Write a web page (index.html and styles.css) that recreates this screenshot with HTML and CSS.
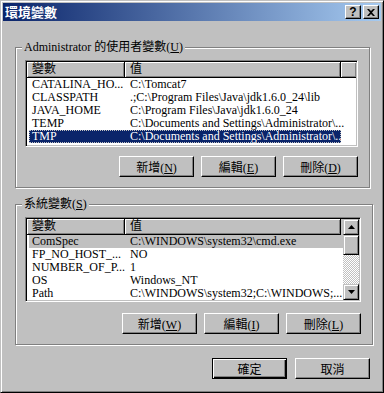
FILE: index.html
```html
<!DOCTYPE html>
<html lang="zh-Hant">
<head>
  <meta charset="UTF-8" />
  <meta name="viewport" content="width=device-width,initial-scale=1.0"/>
  <title>環境變數</title>
  <link rel="stylesheet" href="styles.css">
</head>
<body>
  <div class="window">
    <div class="titlebar">
      <span class="title">環境變數</span>
      <div class="caption-btns">
        <span class="cbtn help">?</span>
        <span class="cbtn">
          <svg width="8" height="7" viewBox="0 0 8 7"><path d="M0 0h2l2 2 2-2h2L5 3.5 8 7H6L4 5 2 7H0l3-3.5z" fill="#000"/></svg>
        </span>
      </div>
    </div>

    <div class="body">
      <fieldset class="group">
        <legend>Administrator 的使用者變數(<u>U</u>)</legend>
        <div class="list">
          <div class="list-main">
            <div class="list-head">
              <span class="hcell col-name">變數</span>
              <span class="hcell col-value">值</span>
              <span class="hcell col-rest"></span>
            </div>
            <div class="list-rows tall">
              <div class="row"><span class="col-name">CATALINA_HO...</span><span class="col-value">C:\Tomcat7</span></div>
              <div class="row"><span class="col-name">CLASSPATH</span><span class="col-value">.;C:\Program Files\Java\jdk1.6.0_24\lib</span></div>
              <div class="row"><span class="col-name">JAVA_HOME</span><span class="col-value">C:\Program Files\Java\jdk1.6.0_24</span></div>
              <div class="row"><span class="col-name">TEMP</span><span class="col-value">C:\Documents and Settings\Administrator\...</span></div>
              <div class="row selected"><span class="col-name">TMP</span><span class="col-value">C:\Documents and Settings\Administrator\...</span></div>
            </div>
          </div>
        </div>
        <div class="btn-row">
          <button class="btn">新增(<u>N</u>)</button>
          <button class="btn">編輯(<u>E</u>)</button>
          <button class="btn">刪除(<u>D</u>)</button>
        </div>
      </fieldset>

      <fieldset class="group second">
        <legend>系統變數(<u>S</u>)</legend>
        <div class="list">
          <div class="list-main">
            <div class="list-head">
              <span class="hcell col-name">變數</span>
              <span class="hcell col-value">值</span>
            </div>
            <div class="list-rows">
              <div class="row inactive"><span class="col-name">ComSpec</span><span class="col-value">C:\WINDOWS\system32\cmd.exe</span></div>
              <div class="row"><span class="col-name">FP_NO_HOST_...</span><span class="col-value">NO</span></div>
              <div class="row"><span class="col-name">NUMBER_OF_P...</span><span class="col-value">1</span></div>
              <div class="row"><span class="col-name">OS</span><span class="col-value">Windows_NT</span></div>
              <div class="row"><span class="col-name">Path</span><span class="col-value">C:\WINDOWS\system32;C:\WINDOWS;...</span></div>
              <div class="row"><span class="col-name">PATHEXT</span><span class="col-value">.COM;.EXE;.BAT;.CMD;.VBS;.VBE;...</span></div>
            </div>
          </div>
          <div class="scrollbar">
            <span class="sbtn">
              <svg width="7" height="4" viewBox="0 0 7 4"><path d="M3.5 0L7 4H0z" fill="#000"/></svg>
            </span>
            <span class="thumb"></span>
            <span class="track"></span>
            <span class="sbtn">
              <svg width="7" height="4" viewBox="0 0 7 4"><path d="M0 0h7L3.5 4z" fill="#000"/></svg>
            </span>
          </div>
        </div>
        <div class="btn-row">
          <button class="btn">新增(<u>W</u>)</button>
          <button class="btn">編輯(<u>I</u>)</button>
          <button class="btn">刪除(<u>L</u>)</button>
        </div>
      </fieldset>

      <div class="dialog-btns">
        <button class="btn default">確定</button>
        <button class="btn">取消</button>
      </div>
    </div>
  </div>
</body>
</html>
```

FILE: styles.css
```css
body {
  margin: 0;
  font-family: "Liberation Serif", "Noto Sans CJK TC", serif;
  font-size: 12px;
  color: #000;
  background: #c0c0c0;
}
.window {
  width: 384px;
  height: 393px;
  box-sizing: border-box;
  background: #c0c0c0;
  border: 1px solid;
  border-color: #c0c0c0 #000 #000 #c0c0c0;
  box-shadow: inset 1px 1px #fff, inset -1px -1px #808080;
  padding: 2px;
}
.titlebar {
  height: 18px;
  display: flex;
  align-items: center;
  justify-content: space-between;
  background: linear-gradient(to right, #0a246a, #a6caf0);
  padding: 0 2px 0 2px;
}
.title {
  color: #fff;
  font-family: "Noto Sans CJK TC", sans-serif;
  font-weight: bold;
  font-size: 13px;
  line-height: 18px;
}
.caption-btns {
  display: flex;
  gap: 2px;
}
.cbtn {
  width: 16px;
  height: 14px;
  box-sizing: border-box;
  display: flex;
  align-items: center;
  justify-content: center;
  background: #c0c0c0;
  border: 1px solid;
  border-color: #fff #000 #000 #fff;
  box-shadow: inset -1px -1px #808080;
}
.cbtn.help {
  font-family: "Liberation Sans", sans-serif;
  font-weight: bold;
  font-size: 12px;
  line-height: 12px;
}
.body {
  padding: 0 11px 0 12px;
}
.group {
  margin: 19px 0 0 0;
  padding: 6px 11px 10px 9px;
  border: 1px solid #808080;
  box-shadow: inset 1px 1px #fff, 1px 1px #fff;
}
.group.second {
  margin-top: 9px;
}
.group legend {
  margin-left: -3px;
  padding: 0 2px;
  background: #c0c0c0;
  line-height: 14px;
}
.list {
  display: flex;
  background: #fff;
  border: 1px solid;
  border-color: #808080 #fff #fff #808080;
  box-shadow: inset 1px 1px #000, inset -1px -1px #c0c0c0;
  padding: 1px;
}
.list-main {
  flex: 1;
  min-width: 0;
}
.list-head {
  display: flex;
  height: 16px;
  background: #c0c0c0;
}
.hcell {
  box-sizing: border-box;
  height: 16px;
  line-height: 15px;
  padding-left: 5px;
  box-shadow: inset 1px 1px #fff, inset -1px -1px #808080;
  border-right: 1px solid #000;
  border-bottom: 1px solid #000;
}
.hcell.col-rest {
  flex: 1;
  border-right: 0;
}
.col-name {
  width: 98px;
  flex: none;
}
.col-value {
  width: 216px;
  flex: none;
}
.list-rows {
  height: 65px;
  overflow: hidden;
}
.list-rows.tall {
  height: 67px;
}
.row {
  display: flex;
  height: 13px;
  line-height: 13px;
  white-space: nowrap;
  margin-left: 2px;
  width: 312px;
}
.row .col-name {
  width: 96px;
  padding-left: 3px;
  box-sizing: border-box;
  overflow: hidden;
}
.row .col-value {
  padding-left: 5px;
  overflow: hidden;
}
.row.selected {
  background: #0a246a;
  color: #fff;
  outline: 1px dotted #c0c0c0;
  outline-offset: -1px;
}
.row.inactive {
  background: #c0c0c0;
  width: 314px;
}
.scrollbar {
  width: 16px;
  display: flex;
  flex-direction: column;
}
.sbtn, .thumb {
  box-sizing: border-box;
  height: 16px;
  flex: none;
  display: flex;
  align-items: center;
  justify-content: center;
  background: #c0c0c0;
  border: 1px solid;
  border-color: #c0c0c0 #000 #000 #c0c0c0;
  box-shadow: inset 1px 1px #fff, inset -1px -1px #808080;
}
.thumb {
  height: 20px;
}
.track {
  flex: 1;
  background: repeating-conic-gradient(#c0c0c0 0 25%, #fff 0 50%) 0 0 / 2px 2px;
}
.btn-row {
  display: flex;
  justify-content: flex-end;
  gap: 7px;
  margin-top: 9px;
}
.second .btn-row {
  margin-top: 11px;
}
.btn {
  width: 75px;
  height: 21px;
  margin: 0;
  padding: 0;
  font: inherit;
  color: #000;
  background: #c0c0c0;
  border: 1px solid;
  border-color: #fff #000 #000 #fff;
  box-shadow: inset -1px -1px #808080;
}
.btn.default {
  border-color: #000;
  box-shadow: inset 1px 1px #fff, inset -1px -1px #000, inset -2px -2px #808080;
}
.dialog-btns {
  display: flex;
  justify-content: flex-end;
  gap: 8px;
  margin-top: 13px;
}
```
